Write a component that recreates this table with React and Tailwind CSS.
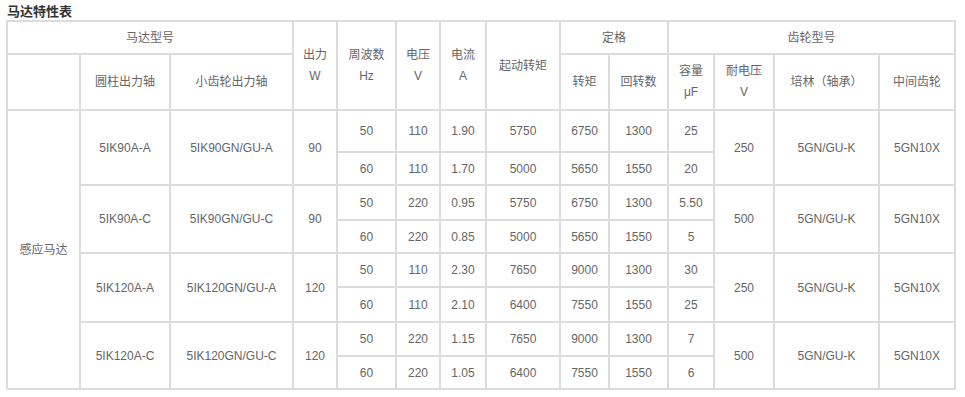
import React from 'react';

const groups = [
  {
    shaft: '5IK90A-A', gear: '5IK90GN/GU-A', power: '90', withstand: '250',
    rows: [
      ['50', '110', '1.90', '5750', '6750', '1300', '25'],
      ['60', '110', '1.70', '5000', '5650', '1550', '20'],
    ],
    heights: ['h-[42px]', 'h-[33px]'],
  },
  {
    shaft: '5IK90A-C', gear: '5IK90GN/GU-C', power: '90', withstand: '500',
    rows: [
      ['50', '220', '0.95', '5750', '6750', '1300', '5.50'],
      ['60', '220', '0.85', '5000', '5650', '1550', '5'],
    ],
    heights: ['h-[35px]', 'h-[33px]'],
  },
  {
    shaft: '5IK120A-A', gear: '5IK120GN/GU-A', power: '120', withstand: '250',
    rows: [
      ['50', '110', '2.30', '7650', '9000', '1300', '30'],
      ['60', '110', '2.10', '6400', '7550', '1550', '25'],
    ],
    heights: ['h-[34px]', 'h-[35px]'],
  },
  {
    shaft: '5IK120A-C', gear: '5IK120GN/GU-C', power: '120', withstand: '500',
    rows: [
      ['50', '220', '1.15', '7650', '9000', '1300', '7'],
      ['60', '220', '1.05', '6400', '7550', '1550', '6'],
    ],
    heights: ['h-[34px]', 'h-[33px]'],
  },
];

const widths = [73, 90, 123, 44, 59, 44, 46, 74, 49, 59, 46, 60, 105, 76];

const td = 'border-2 border-[#dcdcdc] text-center align-middle p-0';

export default function App() {
  return (
    <div
      className="w-[965px] h-[397px] bg-white pl-[6px] pt-[5px] text-[12px] text-[#666]"
      style={{ fontFamily: '"Liberation Sans", "Noto Sans CJK SC", sans-serif' }}
    >
      {/* 标题 */}
      <div className="text-[13px] font-bold text-[#333] leading-[14px] h-[15px] pl-[1px]">马达特性表</div>

      <table className="table-fixed border-collapse w-[950px]">
        <colgroup>
          {widths.map((w, i) => (
            <col key={i} style={{ width: w }} />
          ))}
        </colgroup>
        <thead>
          <tr>
            <td colSpan={3} className={`${td} h-[33px]`}>马达型号</td>
            <td rowSpan={2} className={`${td} leading-[21px]`}>出力<br />W</td>
            <td rowSpan={2} className={`${td} leading-[21px]`}>周波数<br />Hz</td>
            <td rowSpan={2} className={`${td} leading-[21px]`}>电压<br />V</td>
            <td rowSpan={2} className={`${td} leading-[21px]`}>电流<br />A</td>
            <td rowSpan={2} className={td}>起动转矩</td>
            <td colSpan={2} className={td}>定格</td>
            <td colSpan={4} className={td}>齿轮型号</td>
          </tr>
          <tr>
            <td className={`${td} h-[56px]`}></td>
            <td className={td}>圆柱出力轴</td>
            <td className={td}>小齿轮出力轴</td>
            <td className={td}>转矩</td>
            <td className={td}>回转数</td>
            <td className={`${td} leading-[21px]`}>容量<br />μF</td>
            <td className={`${td} leading-[21px]`}>耐电压<br />V</td>
            <td className={td}>培林（轴承）</td>
            <td className={td}>中间齿轮</td>
          </tr>
        </thead>
        <tbody>
          {groups.map((g, gi) =>
            g.rows.map((r, ri) => (
              <tr key={`${gi}-${ri}`}>
                {gi === 0 && ri === 0 && (
                  <td rowSpan={8} className={td}>感应马达</td>
                )}
                {ri === 0 && (
                  <>
                    <td rowSpan={2} className={td}>{g.shaft}</td>
                    <td rowSpan={2} className={td}>{g.gear}</td>
                    <td rowSpan={2} className={td}>{g.power}</td>
                  </>
                )}
                {r.map((v, vi) => (
                  <td key={vi} className={`${td} ${vi === 0 ? g.heights[ri] : ''}`}>{v}</td>
                ))}
                {ri === 0 && (
                  <>
                    <td rowSpan={2} className={td}>{g.withstand}</td>
                    <td rowSpan={2} className={td}>5GN/GU-K</td>
                    <td rowSpan={2} className={td}>5GN10X</td>
                  </>
                )}
              </tr>
            ))
          )}
        </tbody>
      </table>
    </div>
  );
}
